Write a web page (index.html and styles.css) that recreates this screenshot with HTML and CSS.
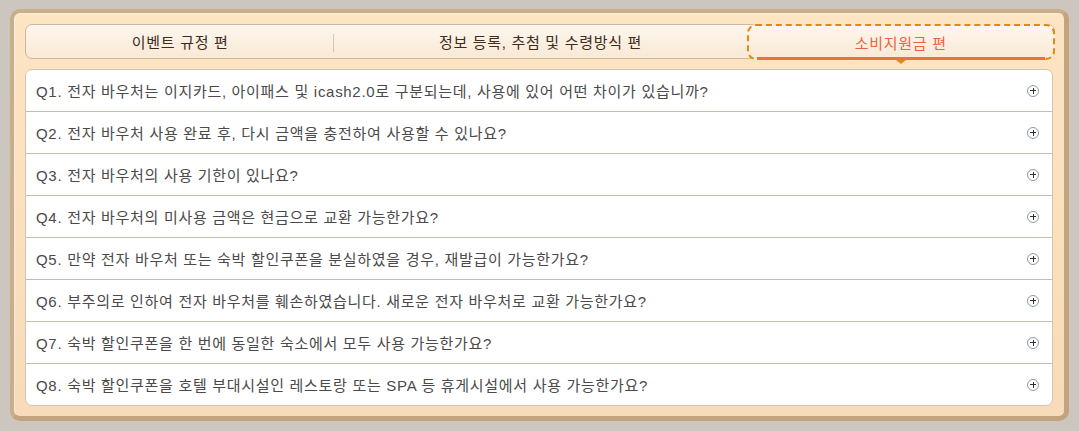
FILE: index.html
```html
<!DOCTYPE html>
<html lang="ko">
<head>
<meta charset="utf-8">
<link rel="stylesheet" href="styles.css">
</head>
<body>
<div class="panel">
  <div class="tabs">
    <div class="tab tab-side">이벤트 규정 편</div>
    <div class="tab tab-mid">정보 등록, 추첨 및 수령방식 편</div>
    <div class="tab tab-side active">소비지원금 편</div>
  </div>
  <ul class="faq">
    <li class="row"><span class="q">Q1. 전자 바우처는 이지카드, 아이패스 및 icash2.0로 구분되는데, 사용에 있어 어떤 차이가 있습니까?</span><span class="plus"></span></li>
    <li class="row"><span class="q">Q2. 전자 바우처 사용 완료 후, 다시 금액을 충전하여 사용할 수 있나요?</span><span class="plus"></span></li>
    <li class="row"><span class="q">Q3. 전자 바우처의 사용 기한이 있나요?</span><span class="plus"></span></li>
    <li class="row"><span class="q">Q4. 전자 바우처의 미사용 금액은 현금으로 교환 가능한가요?</span><span class="plus"></span></li>
    <li class="row"><span class="q">Q5. 만약 전자 바우처 또는 숙박 할인쿠폰을 분실하였을 경우, 재발급이 가능한가요?</span><span class="plus"></span></li>
    <li class="row"><span class="q">Q6. 부주의로 인하여 전자 바우처를 훼손하였습니다. 새로운 전자 바우처로 교환 가능한가요?</span><span class="plus"></span></li>
    <li class="row"><span class="q">Q7. 숙박 할인쿠폰을 한 번에 동일한 숙소에서 모두 사용 가능한가요?</span><span class="plus"></span></li>
    <li class="row"><span class="q">Q8. 숙박 할인쿠폰을 호텔 부대시설인 레스토랑 또는 SPA 등 휴게시설에서 사용 가능한가요?</span><span class="plus"></span></li>
  </ul>
</div>
</body>
</html>
```
FILE: styles.css
```css
* { box-sizing: border-box; }
html, body { margin: 0; padding: 0; }
body {
  background: #cdc6be;
  font-family: "Liberation Sans", "Noto Sans CJK KR", sans-serif;
  width: 1079px;
  height: 431px;
  padding: 9px 10px 10px 10px;
}
.panel {
  height: 412px;
  border-radius: 10px;
  border-style: solid;
  border-color: #c9ae8c #c2a47f #c2a47f #c9ae8c;
  border-width: 4px 5px 5px 4px;
  background: linear-gradient(#fde4c2, #f8dcb9);
  padding: 11px 11px 11px 11px;
  box-shadow: inset 1px 1px 2px rgba(255,255,255,0.4);
}
.tabs {
  display: flex;
  height: 35px;
  margin-right: -2px;
  border: 1px solid #cbb89f;
  border-radius: 7px;
  background: linear-gradient(#fdf6ee, #f9e9d6);
  position: relative;
}
.tab {
  display: flex;
  align-items: center;
  justify-content: center;
  font-size: 15px;
  letter-spacing: 0.7px;
  color: #3d2c1c;
  position: relative;
}
.tab-side { flex: 0 0 30%; }
.tab-mid { flex: 1 1 auto; }
.tabs .tab:first-child::after {
  content: "";
  position: absolute;
  right: 0;
  top: 9px;
  height: 18px;
  border-right: 1px solid #d8c6ae;
}
.tab.active {
  color: #e8663d;
  margin: -1px -1px -2px 0;
  border: 2px dashed #e38a0c;
  border-radius: 9px;
  background: linear-gradient(#fdf6ee, #f9e9d6);
}
.tab.active::before {
  content: "";
  position: absolute;
  left: 8px;
  right: 8px;
  bottom: -2px;
  height: 3px;
  background: #e8714a;
}
.tab.active::after {
  content: "";
  position: absolute;
  left: 50%;
  bottom: -6px;
  margin-left: -5px;
  border-left: 5px solid transparent;
  border-right: 5px solid transparent;
  border-top: 4px solid #e38a0c;
}
.faq {
  list-style: none;
  margin: 10px 0 0 0;
  padding: 0;
  background: #fff;
  border: 1px solid #d6c5ad;
  border-radius: 7px;
  overflow: hidden;
}
.row {
  display: flex;
  align-items: center;
  justify-content: space-between;
  height: 42px;
  padding: 0 13px 0 10px;
  border-bottom: 1px solid #c9bba8;
  font-size: 15px;
  letter-spacing: 0.7px;
  color: #4a4a4a;
}
.row:last-child { border-bottom: none; height: 41px; }
.plus {
  width: 12px;
  height: 12px;
  border: 1px solid #8a9aa8;
  border-radius: 50%;
  position: relative;
  flex: 0 0 auto;
}
.plus::before, .plus::after {
  content: "";
  position: absolute;
  background: #3a2e22;
}
.plus::before { left: 2px; right: 2px; top: 4.5px; height: 1px; }
.plus::after { top: 2px; bottom: 2px; left: 4.5px; width: 1px; }
```
